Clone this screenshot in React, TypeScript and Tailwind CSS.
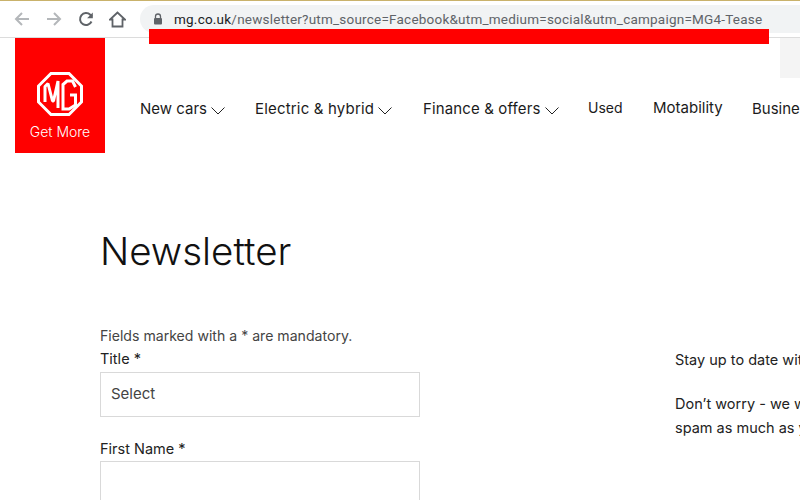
const font = "font-['Inter','Noto_Sans',sans-serif]"

const navItems = [
  { label: 'New cars', chevron: true, cls: 'w-[115px]' },
  { label: 'Electric & hybrid', chevron: true, cls: 'w-[168px] tracking-[0.18px]' },
  { label: 'Finance & offers', chevron: true, cls: 'w-[165px] tracking-[0.13px]' },
  { label: 'Used', chevron: false, cls: 'w-[65px] -translate-y-[2px] text-[14px]' },
  { label: 'Motability', chevron: false, cls: 'w-[99px] -translate-y-px' },
  { label: 'Business', chevron: false, cls: '' },
]

function MgLogo() {
  return (
    <svg width="46" height="44" viewBox="0 0 46 44" fill="none" stroke="#fff">
      <path d="M14 1.500h18L44.500 14v16L32 42.500H14L1.500 30V14z" strokeWidth="3" />
      <path d="M8 30V14.500l3-3 4.500 17.500h1L21 9v27" strokeWidth="3" strokeLinejoin="bevel" />
      <path d="M38.500 15l-3-6H30l-4 3.500V37h6l6.500-4V23H33" strokeWidth="3" />
    </svg>
  )
}

function Chevron() {
  return (
    <svg className="mt-[3px] ml-[4px] shrink-0" width="14" height="8" viewBox="0 0 14 8" fill="none" stroke="#222" strokeWidth="1">
      <path d="M.5.500 7 7l6.500-6.500" />
    </svg>
  )
}

function Toolbar() {
  return (
    <div className="relative flex h-[38px] shrink-0 items-center border-t border-b border-t-[#c9b26b] border-b-[#dcdcdc] bg-white">
      <div className="flex w-[140px] shrink-0 items-center">
        <svg className="ml-[14px]" width="16" height="16" viewBox="0 0 16 16" fill="none" stroke="#b4b7ba" strokeWidth="2">
          <path d="M15 8H2M8 2 2 8l6 6" />
        </svg>
        <svg className="ml-[16px]" width="16" height="16" viewBox="0 0 16 16" fill="none" stroke="#b4b7ba" strokeWidth="2">
          <path d="M1 8h13M8 2l6 6-6 6" />
        </svg>
        <svg className="ml-[16px]" width="16" height="16" viewBox="0 0 16 16" fill="none" stroke="#5f6368" strokeWidth="2">
          <path d="M13.500 10.500A6 6 0 1 1 12.300 3.800L14 5.500" />
          <path d="M14.800 1.500v5.700H9.100z" fill="#5f6368" stroke="none" />
        </svg>
        <svg className="ml-[15px]" width="17" height="17" viewBox="0 0 17 17" fill="none" stroke="#5f6368" strokeWidth="1.800">
          <path d="M8.500 1.500 1 8.500h2.500V15.500h10V8.500H16z" />
        </svg>
      </div>
      <div className="flex h-[28px] flex-1 items-center rounded-l-[14px] bg-[#f1f3f4] pl-[13px]">
        <svg width="10" height="12" viewBox="0 0 10 12" fill="none">
          <path d="M2.500 5V3.500a2.500 2.500 0 0 1 5 0V5" stroke="#5f6368" strokeWidth="1.300" />
          <rect x="1" y="5" width="8" height="6.500" rx="1" fill="#5f6368" />
        </svg>
        <span className="ml-[11px] whitespace-nowrap font-['Roboto',sans-serif] text-[13.500px] tracking-[0.22px] text-[#5f6368]">
          <span className="text-[#202124]">mg.co.uk</span>
          /newsletter?utm_source=Facebook&utm_medium=social&utm_campaign=MG4-Tease
        </span>
      </div>
      <div className="absolute top-[28px] left-[149px] h-[15px] w-[620px] bg-[#ff0000]" />
    </div>
  )
}

function Header() {
  return (
    <div className="relative flex h-[115px] shrink-0 pl-[15px]">
      <div className="flex w-[90px] shrink-0 flex-col items-center bg-[#ff0000] pt-[34px] text-white">
        <MgLogo />
        <span className="mt-[7px] text-[14px] leading-[18px] font-light">Get More</span>
      </div>
      <nav className="flex h-[142px] items-center pl-[35px] whitespace-nowrap text-[15px] text-[#1b1b1b]">
        {navItems.map((item) => (
          <div key={item.label} className={`flex shrink-0 items-center ${item.cls}`}>
            <span>{item.label}</span>
            {item.chevron && <Chevron />}
          </div>
        ))}
      </nav>
      <div className="absolute top-0 right-0 h-[40px] w-[20px] bg-[#f4f4f4]" />
    </div>
  )
}

function Field({ label, boxGap, children }: { label: string; boxGap: string; children?: string }) {
  return (
    <div>
      <label className="block h-[20px] text-[14.500px] leading-[20px] text-[#222]">{label}</label>
      <div className={`flex h-[45px] w-[320px] items-center border border-[#d9d9d9] px-[10px] text-[15px] text-[#444] ${boxGap}`}>
        {children}
      </div>
    </div>
  )
}

export default function App() {
  return (
    <div className={`flex h-[500px] w-[800px] flex-col overflow-hidden bg-white ${font}`}>
      <Toolbar />
      <Header />
      <main className="flex flex-1 pl-[100px]">
        <div className="w-[575px] shrink-0">
          <h1 className="mt-[74px] text-[38.500px] leading-[48px] font-light text-[#111]">Newsletter</h1>
          <p className="mt-[51px] h-[20px] text-[14.100px] leading-[20px] text-[#444]">
            Fields marked with a * are mandatory.
          </p>
          <div className="mt-[3px] flex flex-col gap-[22px]">
            <Field label="Title *" boxGap="mt-[3px]">Select</Field>
            <Field label="First Name *" boxGap="mt-[2px]" />
          </div>
        </div>
        <div className="mt-[195px] text-[14.500px] leading-[24px] whitespace-nowrap text-[#222]">
          <p>Stay up to date with all the latest</p>
          <p className="mt-[20px]">Don’t worry - we won’t send you</p>
          <p>spam as much as you hate it</p>
        </div>
      </main>
    </div>
  )
}
